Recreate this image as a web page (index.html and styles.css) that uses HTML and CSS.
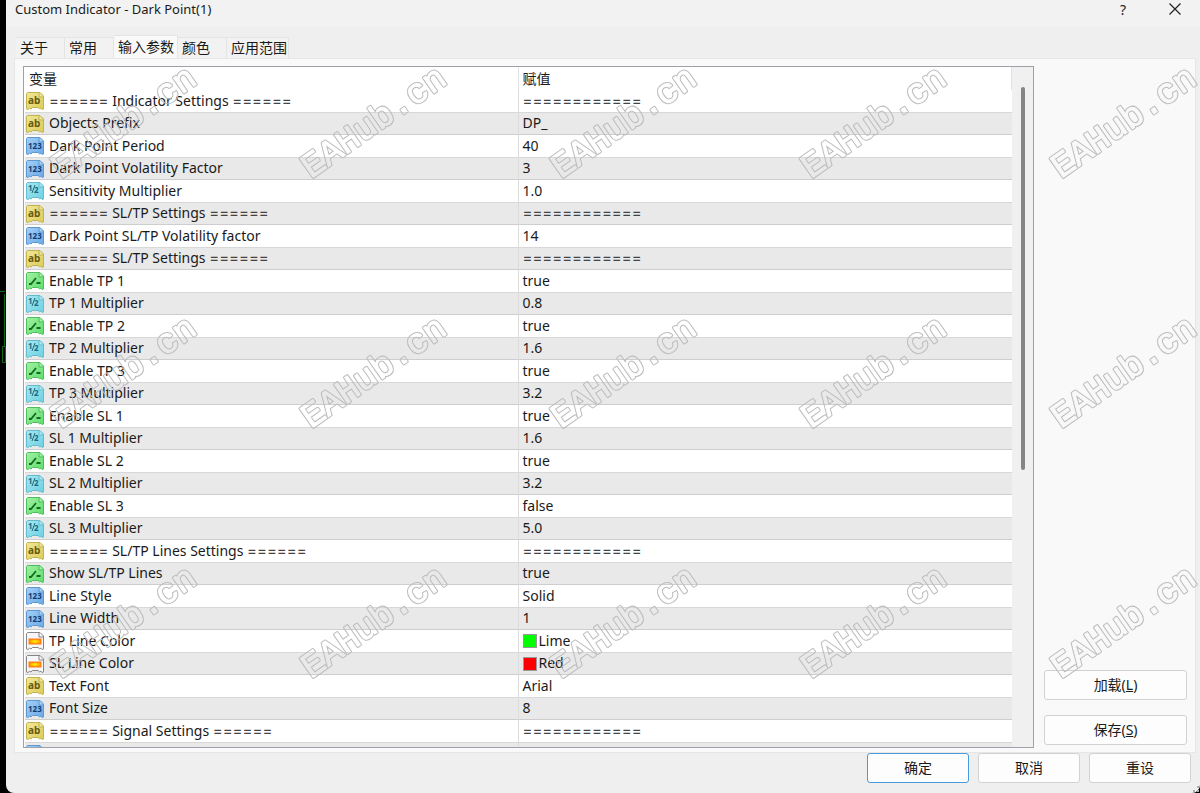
FILE: index.html
```
<!DOCTYPE html>
<html lang="zh-CN">
<head>
  <meta charset="UTF-8" />
  <meta name="viewport" content="width=device-width, initial-scale=1.0" />
  <title>Custom Indicator - Dark Point(1)</title>
  <link rel="stylesheet" href="styles.css">
</head>
<body>
  <!-- icon shapes used by the rows -->
  <svg class="defs" width="0" height="0" aria-hidden="true">
    <defs>
      <linearGradient id="g-string" x2="1" y2="1"><stop offset="0" stop-color="#f0e89c"/><stop offset="1" stop-color="#dccb55"/></linearGradient>
      <linearGradient id="g-int" x2="1" y2="1"><stop offset="0" stop-color="#a4d0f8"/><stop offset="1" stop-color="#6aa8e6"/></linearGradient>
      <linearGradient id="g-double" x2="1" y2="1"><stop offset="0" stop-color="#a8e8f2"/><stop offset="1" stop-color="#6cd0e2"/></linearGradient>
      <linearGradient id="g-bool" x2="1" y2="1"><stop offset="0" stop-color="#a4f0a4"/><stop offset="1" stop-color="#5cde6c"/></linearGradient>
      <radialGradient id="g-sun"><stop offset="0" stop-color="#fff200"/><stop offset=".5" stop-color="#ffc800"/><stop offset="1" stop-color="#ff8a00"/></radialGradient>
      <path id="sheet" d="M1.500 .5H14L17.500 4V17L16 17.500L15 16.200L13.500 16.800L12 15.500H6.500L5 17L3.500 16.200L2 17.500L.5 17V1.500Z"/>
      <path id="fold" d="M13 .5V5H17.500"/>
    </defs>
  </svg>

  <div class="desktop">
    <svg class="chart" width="6" height="80" aria-hidden="true">
      <path d="M0 1.500H5M4.500 4V56M2.500 56.500H5.500V72.500H2.500Z" fill="none" stroke="#0b6b12"/>
    </svg>
    <main class="dialog">
      <header class="titlebar">
        <h1>Custom Indicator - Dark Point(1)</h1>
        <button class="help" aria-label="Help">?</button>
        <button class="close" aria-label="Close">
          <svg width="12" height="12" viewBox="0 0 12 12"><path d="M.5 .5L11.500 11.500M11.500 .5L.5 11.500" stroke="#222" stroke-width="1.200"/></svg>
        </button>
      </header>

      <nav class="tabs" role="tablist">
        <button role="tab">关于</button>
        <button role="tab">常用</button>
        <button role="tab" class="active" aria-selected="true">输入参数</button>
        <button role="tab">颜色</button>
        <button role="tab" class="last">应用范围</button>
      </nav>

      <section class="panel">
        <div class="list">
          <div class="viewport">
            <table>
              <thead>
                <tr><th>变量</th><th>赋值</th></tr>
              </thead>
              <tbody id="params"></tbody>
            </table>
          </div>
          <div class="scrollbar"><div class="thumb"></div></div>
        </div>
        <div class="side">
          <button class="btn">加载(<u>L</u>)</button>
          <button class="btn">保存(<u>S</u>)</button>
        </div>
      </section>

      <footer class="actions">
        <button class="btn primary">确定</button>
        <button class="btn">取消</button>
        <button class="btn">重设</button>
      </footer>
      <div class="grip"></div>
    </main>

    <!-- outline mark: a thick rounded text with its own inside cut out -->
    <svg class="watermark" width="100%" height="100%" aria-hidden="true">
      <defs>
        <mask id="hollow" maskUnits="userSpaceOnUse" x="-10" y="-40" width="200" height="60">
          <rect x="-10" y="-40" width="200" height="60" fill="#fff"/>
          <text class="inside">EAHub.cn</text>
        </mask>
        <pattern id="mark" width="250" height="250" patternUnits="userSpaceOnUse">
          <g transform="translate(61 179) rotate(-35)">
            <text class="outside" mask="url(#hollow)">EAHub.cn</text>
          </g>
        </pattern>
      </defs>
      <rect width="100%" height="100%" fill="url(#mark)"/>
    </svg>
  </div>

  <script>
    const EQ = '======';
    const params = [
      ['string', EQ + ' Indicator Settings ' + EQ, EQ + EQ],
      ['string', 'Objects Prefix', 'DP_'],
      ['int', 'Dark Point Period', '40'],
      ['int', 'Dark Point Volatility Factor', '3'],
      ['double', 'Sensitivity Multiplier', '1.0'],
      ['string', EQ + ' SL/TP Settings ' + EQ, EQ + EQ],
      ['int', 'Dark Point SL/TP Volatility factor', '14'],
      ['string', EQ + ' SL/TP Settings ' + EQ, EQ + EQ],
      ['bool', 'Enable TP 1', 'true'],
      ['double', 'TP 1 Multiplier', '0.8'],
      ['bool', 'Enable TP 2', 'true'],
      ['double', 'TP 2 Multiplier', '1.6'],
      ['bool', 'Enable TP 3', 'true'],
      ['double', 'TP 3 Multiplier', '3.2'],
      ['bool', 'Enable SL 1', 'true'],
      ['double', 'SL 1 Multiplier', '1.6'],
      ['bool', 'Enable SL 2', 'true'],
      ['double', 'SL 2 Multiplier', '3.2'],
      ['bool', 'Enable SL 3', 'false'],
      ['double', 'SL 3 Multiplier', '5.0'],
      ['string', EQ + ' SL/TP Lines Settings ' + EQ, EQ + EQ],
      ['bool', 'Show SL/TP Lines', 'true'],
      ['int', 'Line Style', 'Solid'],
      ['int', 'Line Width', '1'],
      ['color', 'TP Line Color', 'Lime'],
      ['color', 'SL Line Color', 'Red'],
      ['string', 'Text Font', 'Arial'],
      ['int', 'Font Size', '8'],
      ['string', EQ + ' Signal Settings ' + EQ, EQ + EQ],
      ['int blank', '', '']
    ];

    const glyphs = {
      string: '<text x="2" y="12" class="t-string">ab</text>',
      int: '<text x="2" y="12" class="t-int">123</text>',
      double: '<text x="2" y="9" class="t-double">1</text><path d="M9 3L6 11" stroke="#176a80"/><text x="8" y="11" class="t-double">2</text>',
      bool: '<path d="M3 12H5L10 6M10.500 11H14.500" fill="none" stroke="#126b20" stroke-width="1.800"/>',
      color: '<rect x="3" y="7" width="12" height="5" fill="url(#g-sun)" stroke="#ff7a1a"/>'
    };

    function icon(type) {
      return '<svg class="icon ' + type + '" width="18" height="18" viewBox="0 0 18 18" aria-hidden="true">' +
        '<use href="#sheet" class="sheet"/><use href="#fold" class="fold"/>' + (glyphs[type] || '') + '</svg>';
    }

    function withRules(text) {
      return text.replace(/=+/g, '<span class="rule">$&</span>');
    }

    document.getElementById('params').innerHTML = params.map(function (p) {
      const swatch = p[0] === 'color' ? '<i class="swatch ' + p[2].toLowerCase() + '"></i>' : '';
      return '<tr><td><div class="cell">' + icon(p[0]) + '<div class="text">' + withRules(p[1]) + '</div></div></td>' +
        '<td><div class="cell">' + swatch + '<div class="text">' + withRules(p[2]) + '</div></div></td></tr>';
    }).join('');
  </script>
</body>
</html>
```
FILE: styles.css
```
* {
  box-sizing: border-box;
}
body {
  margin: 0;
  background: #000;
  color: #1a1a1a;
  font-family: "Noto Sans", "Noto Sans CJK SC", sans-serif;
  font-size: 14px;
}
button {
  margin: 0;
  padding: 0;
  border: none;
  background: none;
  color: inherit;
  font: inherit;
}
.defs {
  position: absolute;
}
.desktop {
  position: relative;
  height: 100vh;
  padding-left: 6px;
  overflow: hidden;
}
.chart {
  position: absolute;
  left: 0;
  top: 290px;
}
.dialog {
  position: relative;
  height: 100%;
  display: flex;
  flex-direction: column;
  background: #efefef;
  border-radius: 0 0 8px 8px;
}

/* title bar */
.titlebar {
  height: 26px;
  display: flex;
  align-items: center;
  padding: 0 19px 8px 9px;
  background: #f2f2f2;
}
.titlebar h1 {
  flex: 1;
  margin: 0;
  font-size: 13px;
  font-weight: normal;
}
.help {
  width: 12px;
  margin-right: 40px;
}
.close {
  display: flex;
}

/* tabs */
.tabs {
  display: flex;
  align-items: flex-end;
  height: 32px;
  padding-left: 10px;
}
.tabs button {
  width: 49px;
  height: 21px;
  padding-left: 4px;
  border: 1px solid #e4e4e4;
  border-width: 1px 1px 0 0;
  background: #f2f2f2;
  line-height: 20px;
  text-align: left;
  white-space: nowrap;
}
.tabs .active {
  width: 64px;
  height: 23px;
  background: #f9f9f9;
}
.tabs .last {
  width: 62px;
}

/* parameter list */
.panel {
  flex: 1;
  min-height: 0;
  display: flex;
  gap: 10px;
  margin: 0 4px 0 8px;
  padding: 7px 8px 4px 8px;
  border: 1px solid #e6e6e6;
  background: #f9f9f9;
}
.list {
  flex: 1;
  display: flex;
  border: 1px solid #a0a0a8;
  background: #fff;
}
.viewport {
  flex: 1;
  overflow: hidden;
  padding-left: 1px;
}
table {
  width: 100%;
  border-collapse: separate;
  border-spacing: 0;
  table-layout: fixed;
}
th,
td {
  padding: 0;
  text-align: left;
  font-weight: normal;
}
th {
  height: 23px;
  padding-left: 4px;
  border-right: 1px solid #e2e2e2;
  line-height: 22px;
}
td {
  height: 22px;
}
td:first-child {
  border-right: 1px solid #dcdcdc;
}
tr:nth-child(even) td {
  height: 23px;
  border-top: 1px solid #d8d8d8;
  border-bottom: 1px solid #cecece;
  background: #e9e9e9;
}
.cell {
  display: flex;
  align-items: center;
  height: 21px;
  gap: 5px;
  padding-left: 1px;
  white-space: nowrap;
}
td + td .cell {
  gap: 2px;
  padding-left: 4px;
}
.text {
  height: 21px;
  line-height: 19px;
}
.rule {
  color: #444;
  font-family: Inter, sans-serif;
  font-size: 15px;
  line-height: 1;
  font-variant-ligatures: none;
}
.icon {
  flex: none;
}
.sheet,
.fold {
  stroke-width: 1;
}
.fold {
  fill: rgba(255, 255, 255, 0.3);
}
.string {
  fill: url(#g-string);
  stroke: #c2b24c;
}
.int {
  fill: url(#g-int);
  stroke: #5c98d2;
}
.double {
  fill: url(#g-double);
  stroke: #62bccd;
}
.bool {
  fill: url(#g-bool);
  stroke: #4cbf5c;
}
.color {
  fill: #f6f6f6;
  stroke: #858585;
}
.icon text {
  stroke: none;
  font-weight: bold;
}
.t-string {
  fill: #665a10;
  font-size: 10px;
}
.t-int {
  fill: #123d70;
  font-size: 8px;
}
.t-double {
  fill: #176a80;
  font-size: 8px;
}
.swatch {
  width: 14px;
  height: 14px;
  border: 1px solid #999;
}
.lime {
  background: #00ff00;
}
.red {
  background: #ff0000;
}
.scrollbar {
  width: 21px;
  padding: 20px 8px 0 9px;
  background: #f0f0f0;
}
.thumb {
  width: 4px;
  height: 58%;
  min-height: 20px;
  border-radius: 2px;
  background: #858585;
}

/* buttons */
.side {
  width: 143px;
  display: flex;
  flex-direction: column;
  justify-content: flex-end;
  gap: 15px;
  padding-bottom: 3px;
}
.btn {
  height: 30px;
  padding-bottom: 2px;
  border: 1px solid #d2d2d2;
  border-radius: 3px;
  background: #fdfdfd;
}
.actions {
  display: flex;
  justify-content: flex-end;
  gap: 9px;
  height: 40px;
  padding-right: 9px;
}
.actions .btn {
  width: 102px;
}
.actions .primary {
  border-color: #4a9bdc;
}
.grip {
  position: absolute;
  right: 1px;
  bottom: 1px;
  width: 6px;
  height: 6px;
  border-right: 2px dotted #b0b0b0;
  border-bottom: 2px dotted #b0b0b0;
}

/* repeated site mark over the whole window */
.watermark {
  position: absolute;
  left: 0;
  top: 0;
  pointer-events: none;
}
.watermark text {
  font-family: "Liberation Mono", monospace;
  font-size: 35px;
  stroke-linejoin: round;
}
.outside {
  fill: #bcbcbc;
  stroke: #bcbcbc;
  stroke-width: 3;
}
.inside {
  fill: #000;
  stroke: #000;
  stroke-width: 1;
}
```
